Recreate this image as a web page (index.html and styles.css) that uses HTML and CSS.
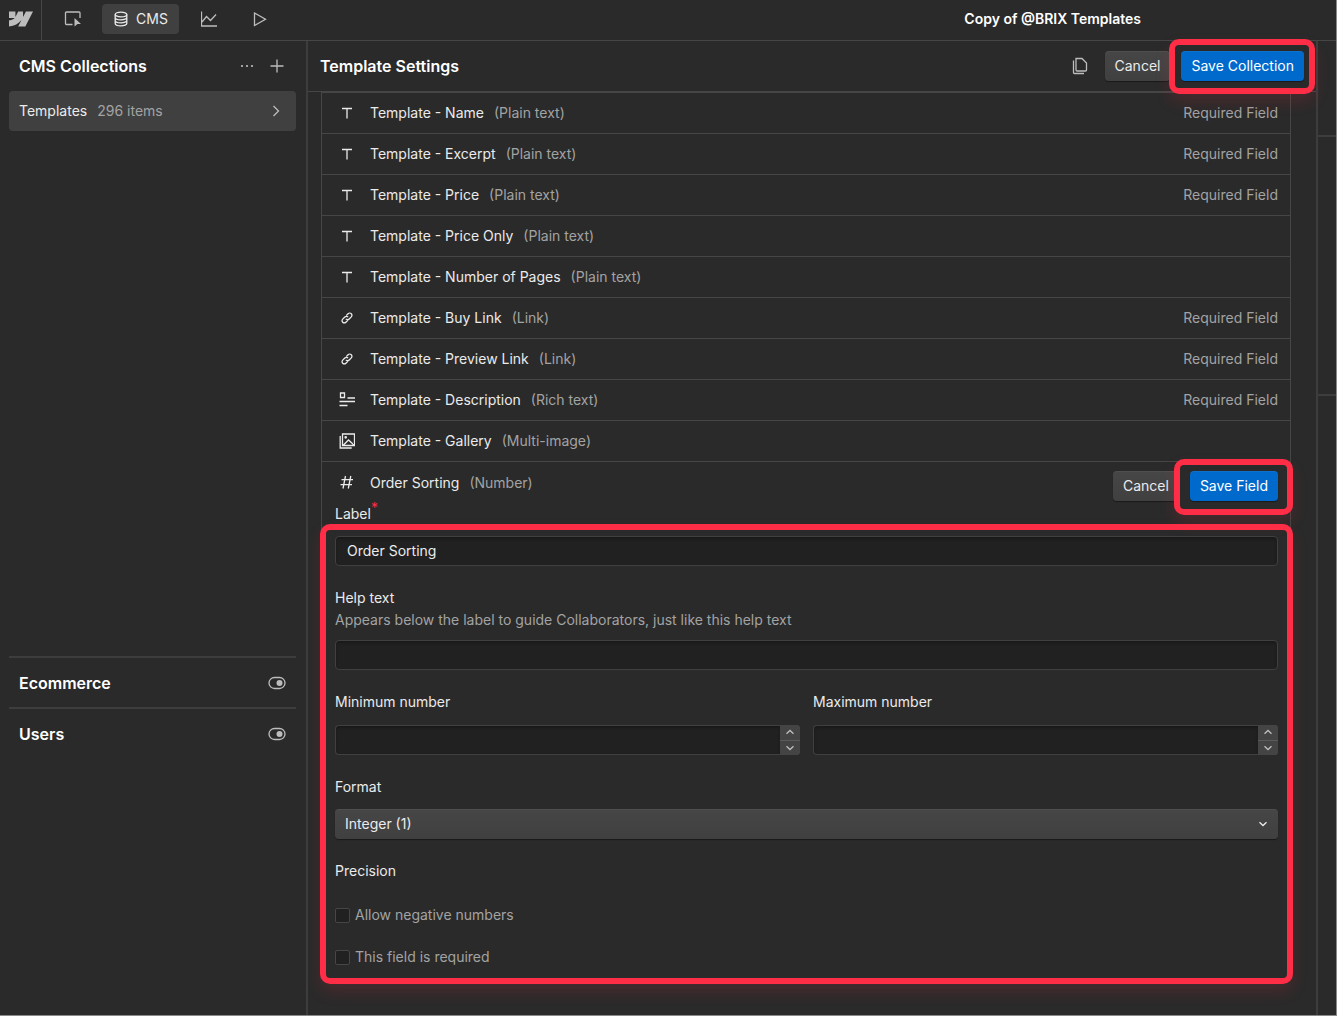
FILE: index.html
```html
<!DOCTYPE html>
<html lang="en">
<head>
  <meta charset="UTF-8">
  <meta name="viewport" content="width=device-width, initial-scale=1.0">
  <title>CMS - Template Settings</title>
  <link rel="stylesheet" href="styles.css">
</head>
<body>
  <!-- shared icons -->
  <svg class="sprite" aria-hidden="true">
    <symbol id="i-text" viewBox="0 0 16 16"><path d="M3 3.500h10M8 3.500v10"/></symbol>
    <symbol id="i-link" viewBox="0 0 16 16"><path d="M7.200 5.600l1.900-1.900a2.200 2.200 0 0 1 3.200 3.200l-2.100 2.100a2.200 2.200 0 0 1-3.300-.1M8.800 10.400l-1.900 1.900a2.200 2.200 0 0 1-3.200-3.200L5.800 7a2.200 2.200 0 0 1 3.300.1"/></symbol>
    <symbol id="i-rich" viewBox="0 0 16 16"><path d="M1.500 1h4v4.500h-4zM8.500 6H16M.5 9.500H16M.5 13.500h8"/></symbol>
    <symbol id="i-gallery" viewBox="0 0 16 16"><path d="M3.500 1h12v11.500h-12zM1.200 3v12h11.500M4.500 12l5-5 5.500 5"/><circle cx="6.700" cy="4.300" r=".7"/></symbol>
    <symbol id="i-number" viewBox="0 0 16 16"><path d="M6.500 1l-2.500 12.500M11.800 1L9.300 13.500M2.500 4.700H14M1.500 9.700H13"/></symbol>
    <symbol id="i-toggle" viewBox="0 0 18 14"><rect x="1" y="1.500" width="16" height="11" rx="5.500"/><circle class="fill" cx="11.500" cy="7" r="3"/></symbol>
    <symbol id="i-up" viewBox="0 0 10 6"><path d="M1.500 4.800L5 1.500l3.500 3.300"/></symbol>
    <symbol id="i-down" viewBox="0 0 10 6"><path d="M1.500 1.200L5 4.500l3.500-3.300"/></symbol>
  </svg>

  <div class="app">
    <header class="topbar">
      <a class="logo" href="#" aria-label="Home">
        <svg width="24" height="24" viewBox="0 0 24 24"><path d="m24 4.515-7.658 14.970H9.149l3.205-6.204h-.144C9.566 16.713 5.621 18.973 0 19.485v-6.118s3.596-.213 5.710-2.435H0V4.515h6.417v5.278l.144-.001 2.622-5.277h4.854v5.244h.144l2.720-5.244H24Z"/></svg>
      </a>
      <nav class="modes">
        <button type="button" aria-label="Designer">
          <svg class="icon" width="18" height="18" viewBox="0 0 18 18"><path d="M8.500 14.500H2.500a1 1 0 0 1-1-1V3a1 1 0 0 1 1-1h12.500a1 1 0 0 1 1 1v5"/><path class="fill" d="M10.500 8l6.500 6h-3.500L10.500 16.500z"/></svg>
        </button>
        <button type="button" class="active">
          <svg class="icon" width="16" height="16" viewBox="0 0 16 16"><ellipse cx="8" cy="3.500" rx="5.800" ry="2.400"/><path d="M2.200 3.500v9c0 1.300 2.600 2.400 5.800 2.400s5.800-1.100 5.800-2.400v-9M2.200 6.500c0 1.300 2.600 2.400 5.800 2.400s5.800-1.100 5.800-2.400M2.200 9.500c0 1.300 2.600 2.400 5.800 2.400s5.800-1.100 5.800-2.400"/></svg>
          CMS
        </button>
        <button type="button" aria-label="Insights">
          <svg class="icon" width="16" height="16" viewBox="0 0 16 16"><path d="M.5.500v14.500h15.500M1 11l4.500-5.500 4 4L15 3.500"/></svg>
        </button>
        <button type="button" aria-label="Preview">
          <svg class="icon" width="16" height="16" viewBox="0 0 16 16"><path d="M2.500 2v12.500L13.500 8.200z"/></svg>
        </button>
      </nav>
      <div class="site-name">Copy of @BRIX Templates</div>
    </header>

    <aside class="sidebar">
      <div class="sidebar-head">
        <h2>CMS Collections</h2>
        <button type="button" class="icon-btn" aria-label="More"><svg class="icon" width="14" height="14" viewBox="0 0 14 14"><circle class="fill" cx="2" cy="7" r="1.100"/><circle class="fill" cx="7" cy="7" r="1.100"/><circle class="fill" cx="12" cy="7" r="1.100"/></svg></button>
        <button type="button" class="icon-btn" aria-label="Add collection"><svg class="icon" width="14" height="14" viewBox="0 0 14 14"><path d="M7 .5v13M.5 7h13"/></svg></button>
      </div>
      <nav class="collections">
        <a href="#" class="collection">
          Templates <span class="count">296 items</span>
          <svg class="icon" width="8" height="12" viewBox="0 0 8 12"><path d="M1.500 1L6.500 6l-5 5"/></svg>
        </a>
      </nav>
      <div class="section"><h2>Ecommerce</h2><button type="button" class="icon-btn" aria-label="Toggle Ecommerce"><svg class="icon" width="18" height="14"><use href="#i-toggle"/></svg></button></div>
      <div class="section"><h2>Users</h2><button type="button" class="icon-btn" aria-label="Toggle Users"><svg class="icon" width="18" height="14"><use href="#i-toggle"/></svg></button></div>
    </aside>

    <main class="panel">
      <div class="panel-head">
        <h2>Template Settings</h2>
        <button type="button" class="icon-btn" aria-label="Duplicate"><svg class="icon" width="16" height="18" viewBox="0 0 16 18"><path d="M4 1.500h6l4.500 4.500v7a1 1 0 0 1-1 1H5a1 1 0 0 1-1-1zM1.500 3.500v12a1 1 0 0 0 1 1h9.500"/></svg></button>
        <button type="button" class="btn">Cancel</button>
        <span class="marked"><button type="button" class="btn primary">Save Collection</button></span>
      </div>

      <div class="fields">
        <div class="field"><svg class="icon" width="16" height="16"><use href="#i-text"/></svg>Template - Name <span class="type">(Plain text)</span><span class="required">Required Field</span></div>
        <div class="field"><svg class="icon" width="16" height="16"><use href="#i-text"/></svg>Template - Excerpt <span class="type">(Plain text)</span><span class="required">Required Field</span></div>
        <div class="field"><svg class="icon" width="16" height="16"><use href="#i-text"/></svg>Template - Price <span class="type">(Plain text)</span><span class="required">Required Field</span></div>
        <div class="field"><svg class="icon" width="16" height="16"><use href="#i-text"/></svg>Template - Price Only <span class="type">(Plain text)</span></div>
        <div class="field"><svg class="icon" width="16" height="16"><use href="#i-text"/></svg>Template - Number of Pages <span class="type">(Plain text)</span></div>
        <div class="field"><svg class="icon" width="16" height="16"><use href="#i-link"/></svg>Template - Buy Link <span class="type">(Link)</span><span class="required">Required Field</span></div>
        <div class="field"><svg class="icon" width="16" height="16"><use href="#i-link"/></svg>Template - Preview Link <span class="type">(Link)</span><span class="required">Required Field</span></div>
        <div class="field"><svg class="icon" width="16" height="16"><use href="#i-rich"/></svg>Template - Description <span class="type">(Rich text)</span><span class="required">Required Field</span></div>
        <div class="field"><svg class="icon" width="16" height="16"><use href="#i-gallery"/></svg>Template - Gallery <span class="type">(Multi-image)</span></div>

        <form class="editor">
          <div class="editor-head">
            <div class="editor-title"><svg class="icon" width="16" height="16"><use href="#i-number"/></svg>Order Sorting <span class="type">(Number)</span></div>
            <button type="button" class="btn">Cancel</button>
            <span class="marked marked-field"><button type="button" class="btn primary">Save Field</button></span>
          </div>
          <label class="label-first" for="label">Label<sup>*</sup></label>

          <div class="editor-body">
            <input type="text" id="label" value="Order Sorting">

            <div class="group">
              <label for="help">Help text</label>
              <p class="hint" id="help-hint">Appears below the label to guide Collaborators, just like this help text</p>
              <input type="text" id="help" aria-describedby="help-hint">
            </div>

            <div class="two-cols">
              <div class="group">
                <label for="min">Minimum number</label>
                <div class="number">
                  <input type="number" id="min">
                  <div class="steps">
                    <button type="button" aria-label="Increase minimum"><svg class="icon" width="10" height="6"><use href="#i-up"/></svg></button>
                    <button type="button" aria-label="Decrease minimum"><svg class="icon" width="10" height="6"><use href="#i-down"/></svg></button>
                  </div>
                </div>
              </div>
              <div class="group">
                <label for="max">Maximum number</label>
                <div class="number">
                  <input type="number" id="max">
                  <div class="steps">
                    <button type="button" aria-label="Increase maximum"><svg class="icon" width="10" height="6"><use href="#i-up"/></svg></button>
                    <button type="button" aria-label="Decrease maximum"><svg class="icon" width="10" height="6"><use href="#i-down"/></svg></button>
                  </div>
                </div>
              </div>
            </div>

            <div class="group">
              <label for="format">Format</label>
              <div class="select">
                <select id="format"><option>Integer (1)</option><option>Decimal (1.0)</option></select>
                <svg class="icon" width="10" height="6"><use href="#i-down"/></svg>
              </div>
            </div>

            <div class="group precision">
              <span>Precision</span>
              <label class="check"><input type="checkbox"> Allow negative numbers</label>
              <label class="check"><input type="checkbox"> This field is required</label>
            </div>
          </div>
        </form>
      </div>
    </main>

    <div class="rail"><div></div><div></div></div>
  </div>
</body>
</html>
```
FILE: styles.css
```css
* {
  box-sizing: border-box;
}
body {
  margin: 0;
  background: #2a2a2a;
  color: #ebebeb;
  font-family: Inter, "Liberation Sans", sans-serif;
  font-size: 14px;
  line-height: 20px;
}
h2, p {
  margin: 0;
}
h2 {
  color: #fff;
  font-size: 16px;
  font-weight: 600;
}
button, input, select {
  font: inherit;
  color: inherit;
}
button {
  border: none;
  background: none;
  padding: 0;
  cursor: pointer;
}
a {
  color: inherit;
  text-decoration: none;
}
.sprite {
  position: absolute;
  width: 0;
  height: 0;
}
.icon {
  display: block;
  flex: none;
  fill: none;
  stroke: currentColor;
  stroke-width: 1.3;
}
.fill {
  fill: currentColor;
  stroke: none;
}

.app {
  display: grid;
  grid-template-columns: 308px 1fr 20px;
  grid-template-rows: 41px 1fr;
  min-height: 100vh;
  border-right: 1px solid #8a8a8a;
  border-bottom: 1px solid #8a8a8a;
}

/* top bar */
.topbar {
  grid-column: 1 / -1;
  display: flex;
  align-items: center;
  border-bottom: 1px solid #464646;
}
.logo {
  width: 42px;
  height: 40px;
  padding: 7px 0 0 9px;
  border-right: 1px solid #464646;
  fill: #bdbdbd;
}
.modes {
  display: flex;
  gap: 8px;
  padding: 0 8px 3px 9px;
}
.modes button {
  display: flex;
  align-items: center;
  justify-content: center;
  gap: 7px;
  width: 43px;
  height: 30px;
  border-radius: 4px;
  color: #bdbdbd;
}
.modes button.active {
  width: 77px;
  background: #404040;
  color: #ebebeb;
}
.site-name {
  margin-left: auto;
  padding: 0 195px 3px 0;
  color: #fff;
  font-weight: 600;
}

/* sidebar */
.sidebar {
  display: flex;
  flex-direction: column;
  padding: 0 10px 0 9px;
  border-right: 2px solid #3d3d3d;
}
.sidebar h2 {
  flex: 1;
}
.sidebar-head, .section {
  display: flex;
  align-items: center;
  gap: 16px;
  height: 50px;
  padding: 0 12px 0 10px;
}
.icon-btn {
  color: #bdbdbd;
}
.collections {
  min-height: 565px;
}
.collection {
  display: flex;
  align-items: center;
  height: 40px;
  padding: 0 16px 0 10px;
  border-radius: 4px;
  background: #404040;
}
.collection .icon {
  margin-left: auto;
  color: #bdbdbd;
}
.count, .type, .required, .hint, .check {
  color: #a3a3a3;
}
.count, .type {
  margin-left: 10px;
}
.section {
  height: 51px;
  padding-right: 10px;
  border-top: 2px solid #3d3d3d;
}

/* settings panel */
.panel-head {
  display: flex;
  align-items: center;
  gap: 11px;
  height: 51px;
  padding: 0 12px;
  border-bottom: 1px solid #464646;
}
.panel-head h2 {
  flex: 1;
}
.panel-head .icon-btn {
  margin-right: 6px;
}
.btn {
  height: 30px;
  padding: 0 10px;
  border-radius: 4px;
  background: linear-gradient(#464646, #404040);
  box-shadow: 0 1px 1px rgba(0, 0, 0, 0.4), inset 0 1px 0 rgba(255, 255, 255, 0.05);
}
.btn.primary {
  background: #006acc;
  color: #fff;
}
.marked, .editor-body {
  position: relative;
}
.marked::after, .editor-body::after {
  content: "";
  position: absolute;
  inset: -12px -11px -13px -12px;
  border: 6px solid #ff2d46;
  border-radius: 10px;
  box-shadow: 0 8px 16px rgba(255, 45, 70, 0.14);
  pointer-events: none;
}
.marked-field::after {
  inset: -12px -15px -11px -16px;
}
.editor-body::after {
  inset: -12px -15px -17px;
}
.fields {
  margin: 0 25px 30px 13px;
  border: 1px solid #464646;
  border-bottom: none;
}
.field {
  display: flex;
  align-items: center;
  height: 41px;
  padding: 0 12px 0 17px;
  border-bottom: 1px solid #464646;
}
.field .icon, .editor-title .icon {
  margin-right: 15px;
}
.required {
  margin-left: auto;
}

/* field editor */
.editor {
  padding: 9px 12px 0 13px;
}
.editor-head {
  display: flex;
  gap: 11px;
  height: 33px;
}
.editor-title {
  display: flex;
  flex: 1;
  align-items: center;
  height: 24px;
  padding-left: 4px;
}
.editor label {
  display: block;
}
.editor .label-first {
  margin-bottom: 12px;
}
sup {
  color: #ff2d46;
  font-size: 14px;
  line-height: 0;
}
input[type="text"], input[type="number"] {
  display: block;
  width: 100%;
  height: 30px;
  padding: 0 11px 1px;
  border: 1px solid #404040;
  border-radius: 4px;
  background: #212121;
  box-shadow: inset 0 2px 3px rgba(0, 0, 0, 0.25);
}
input[type="number"] {
  appearance: textfield;
}
.group {
  margin-top: 22px;
}
.group .hint {
  margin: 2px 0 10px;
}
.two-cols {
  display: grid;
  grid-template-columns: 1fr 1fr;
  gap: 13px;
}
.number {
  display: flex;
  margin-top: 13px;
}
.number input {
  border-radius: 4px 0 0 4px;
  border-right: none;
}
.steps {
  display: grid;
  flex: none;
  grid-template-rows: 1fr 1fr;
  gap: 1px;
  width: 20px;
  height: 30px;
  overflow: hidden;
  border-radius: 0 4px 4px 0;
  background: #5a5a5a;
}
.steps button {
  display: grid;
  place-items: center;
  background: #444;
  color: #bdbdbd;
}
.select {
  display: grid;
  align-items: center;
  margin-top: 12px;
}
.select select, .select .icon {
  grid-area: 1 / 1;
}
.select select {
  appearance: none;
  width: 100%;
  height: 30px;
  padding: 0 10px;
  border: none;
  border-radius: 4px;
  background: linear-gradient(#464646, #404040);
  box-shadow: 0 1px 1px rgba(0, 0, 0, 0.4), inset 0 1px 0 rgba(255, 255, 255, 0.05);
}
.select .icon {
  justify-self: end;
  margin-right: 10px;
  pointer-events: none;
}
.editor .check {
  display: flex;
  align-items: center;
  gap: 5px;
  margin-top: 22px;
}
.precision > span {
  display: block;
}
.check input {
  appearance: none;
  width: 15px;
  height: 15px;
  margin: 0;
  border: 1px solid #464646;
  border-radius: 2px;
  background: #212121;
}
.precision > span {
  margin-bottom: 24px;
}

/* right edge strip */
.rail {
  border-left: 2px solid #3d3d3d;
}
.rail div {
  height: 96px;
  border-bottom: 2px solid #3d3d3d;
}
.rail div + div {
  height: 259px;
}
```
